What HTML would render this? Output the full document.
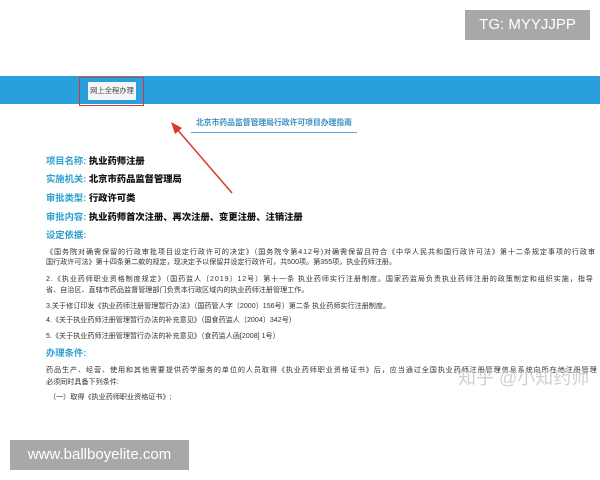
<!DOCTYPE html>
<html><head><meta charset="utf-8"><style>
html,body{margin:0;width:600px;height:480px;overflow:hidden;}
body{background:#fff;position:relative;font-family:"Liberation Sans","Noto Sans CJK SC",sans-serif;}
.a{position:absolute;white-space:nowrap;}
.bar{position:absolute;left:0;top:76px;width:600px;height:28px;background:#29a0dc;}
.lab{position:absolute;left:46px;font-size:9.3px;font-weight:bold;color:#2d9fd0;white-space:nowrap;line-height:12px;}
.lab b{color:#111;}
.s{position:absolute;left:46px;font-size:7.1px;color:#333;white-space:nowrap;line-height:9px;}
</style></head><body>
<div class="a" style="left:465px;top:10px;width:125px;height:30px;background:#a8a8a8;color:#fff;font-size:15px;line-height:30px;text-align:center;">TG: MYYJJPP</div>
<div class="bar"></div>
<div class="a" style="left:79px;top:77px;width:63px;height:27px;border:1px solid #d23a3a;"></div>
<div class="a" style="left:88px;top:82px;width:48px;height:18px;background:#f4f6f8;font-size:7.3px;color:#444;line-height:18px;text-align:center;">网上全程办理</div>
<div class="a" style="left:196px;top:117px;font-size:7.8px;font-weight:bold;color:#3a8fc0;">北京市药品监督管理局行政许可项目办理指南</div>
<div class="a" style="left:191px;top:132px;width:166px;height:1px;background:#5aa8d6;"></div>
<svg class="a" style="left:0;top:0" width="600" height="480"><line x1="232" y1="193" x2="176" y2="128" stroke="#d83a30" stroke-width="1.5"/><polygon points="171,122 182,128 175,134" fill="#d83a30"/></svg>
<div class="lab" style="top:155px">项目名称: <b>执业药师注册</b></div>
<div class="lab" style="top:173px">实施机关: <b>北京市药品监督管理局</b></div>
<div class="lab" style="top:192px">审批类型: <b>行政许可类</b></div>
<div class="lab" style="top:211px">审批内容: <b>执业药师首次注册、再次注册、变更注册、注销注册</b></div>
<div class="lab" style="top:229px">设定依据:</div>
<div class="s" style="top:248px;letter-spacing:0.9px">《国务院对确需保留的行政审批项目设定行政许可的决定》（国务院令第412号)对确需保留且符合《中华人民共和国行政许可法》第十二条规定事项的行政审</div>
<div class="s" style="top:258px">国行政许可法》第十四条第二款的规定，现决定予以保留并设定行政许可，共500项。第355项，执业药师注册。</div>
<div class="s" style="top:275px;letter-spacing:0.9px">2.《执业药师职业资格制度规定》（国药监人〔2019〕12号）第十一条 执业药师实行注册制度。国家药监局负责执业药师注册的政策制定和组织实施，指导</div>
<div class="s" style="top:286px">省、自治区、直辖市药品监督管理部门负责本行政区域内的执业药师注册管理工作。</div>
<div class="s" style="top:302px">3.关于修订印发《执业药师注册管理暂行办法》（国药管人字〔2000〕156号）第二条 执业药师实行注册制度。</div>
<div class="s" style="top:316px">4.《关于执业药师注册管理暂行办法的补充意见》（国食药监人〔2004〕342号）</div>
<div class="s" style="top:332px">5.《关于执业药师注册管理暂行办法的补充意见》（食药监人函[2008] 1号）</div>
<div class="lab" style="top:347px">办理条件:</div>
<div class="s" style="top:366px;letter-spacing:0.9px">药品生产、经营、使用和其他需要提供药学服务的单位的人员取得《执业药师职业资格证书》后，应当通过全国执业药师注册管理信息系统向所在地注册管理</div>
<div class="s" style="top:378px">必须同时具备下列条件:</div>
<div class="s" style="top:393px;left:49px">（一）取得《执业药师职业资格证书》;</div>
<div class="a" style="left:458px;top:364px;font-size:18px;color:rgba(200,200,200,0.85);">知乎 @小知药师</div>
<div class="a" style="left:10px;top:440px;width:179px;height:30px;background:#a8a8a8;color:#fff;font-size:15px;line-height:30px;text-align:center;">www.ballboyelite.com</div>
</body></html>
